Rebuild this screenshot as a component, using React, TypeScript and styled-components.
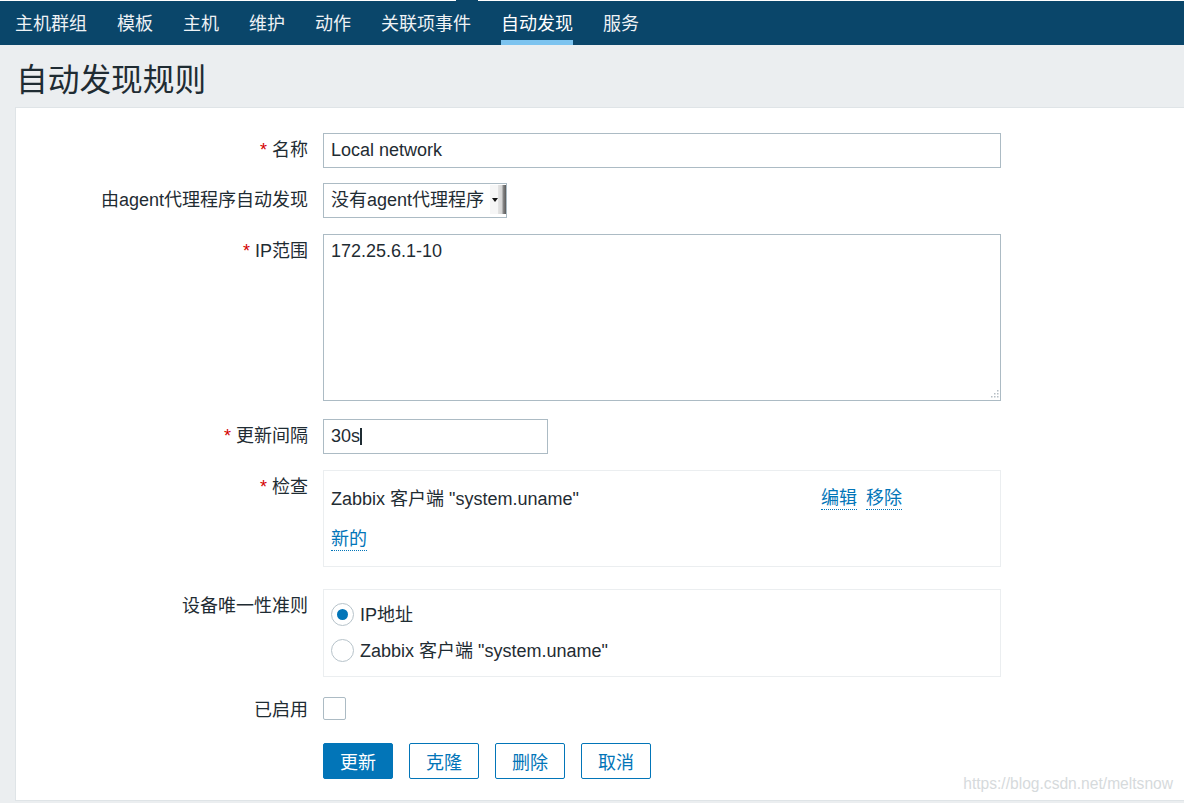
import React from "react";
import styled, { createGlobalStyle } from "styled-components";

const GlobalStyle = createGlobalStyle`
  html, body {
    margin: 0;
    padding: 0;
    background: #ebeef0;
    color: #1f2c33;
    font-family: "Liberation Sans", "Noto Sans CJK SC", sans-serif;
    font-size: 18px;
  }
  * { box-sizing: border-box; }
`;

const Nav = styled.nav`
  position: relative;
  height: 45px;
  background: #0a466a;
  display: flex;
  gap: 30px;
  padding-left: 15px;
  &::before {
    content: "";
    position: absolute;
    top: 0;
    left: 0;
    right: 0;
    height: 1px;
    background: linear-gradient(
      to right,
      #ffffff 0 456px,
      transparent 456px 478px,
      #ffffff 478px
    );
  }
`;

const NavItem = styled.a<{ $active?: boolean }>`
  position: relative;
  display: flex;
  align-items: center;
  height: 45px;
  padding-bottom: 2px;
  color: ${(p) => (p.$active ? "#ffffff" : "#eef2f5")};
  font-size: 18px;
  text-decoration: none;
  white-space: nowrap;
  &::after {
    content: "";
    display: ${(p) => (p.$active ? "block" : "none")};
    position: absolute;
    left: 0;
    right: 0;
    bottom: 0;
    height: 5px;
    background: #7cc3ef;
  }
`;

const TitleBar = styled.header`
  height: 62px;
  display: flex;
  align-items: center;
  padding: 8px 0 0 16px;
`;

const Title = styled.h1`
  margin: 0;
  font-size: 31.7px;
  font-weight: normal;
  line-height: 36px;
  color: #1f2c33;
`;

const Panel = styled.main`
  position: relative;
  margin-left: 15px;
  background: #ffffff;
  border: 1px solid #dfe4e7;
  border-right: none;
  padding: 25px 0 21px;
`;

const Row = styled.div<{ $gap: number }>`
  display: grid;
  grid-template-columns: 292px 1fr;
  column-gap: 15px;
  align-items: start;
  margin-top: ${(p) => p.$gap}px;
`;

const Label = styled.label<{ $lh?: number }>`
  text-align: right;
  white-space: nowrap;
  font-size: 18px;
  line-height: ${(p) => p.$lh ?? 35}px;
  padding-top: ${(p) => (p.$lh ? 1 : 0)}px;
  color: #1f2c33;
`;

const Req = styled.span`
  color: #d40000;
  margin-right: 5px;
`;

const TextInput = styled.input<{ $w: number }>`
  display: block;
  width: ${(p) => p.$w}px;
  height: 35px;
  border: 1px solid #acbbc4;
  padding: 0 7px 1px;
  font-family: inherit;
  font-size: 18px;
  color: #1f2c33;
  background: #ffffff;
  outline: none;
  border-radius: 0;
`;

const InputWrap = styled.div<{ $w: number }>`
  position: relative;
  width: ${(p) => p.$w}px;
`;

const Caret = styled.span`
  position: absolute;
  left: 37px;
  top: 9px;
  width: 2px;
  height: 17px;
  background: #1f2c33;
`;

const SelectBox = styled.div`
  display: flex;
  align-items: stretch;
  width: 184px;
  height: 35px;
  border: 1px solid #acbbc4;
  background: #ffffff;
`;

const SelectText = styled.span`
  flex: 1;
  padding-left: 7px;
  line-height: 32px;
  white-space: nowrap;
  overflow: hidden;
`;

const SelectArrow = styled.span`
  position: relative;
  flex: none;
  width: 16px;
  margin: 1px 0 3px;
  background: linear-gradient(
    to right,
    #f6f6f6 0 8px,
    #e4e4e4 8px,
    #d4d4d4 12px,
    #8c8c8c 13px,
    #5a5a5a 16px
  );
  &::after {
    content: "";
    position: absolute;
    left: 2px;
    top: 13px;
    border-left: 3px solid transparent;
    border-right: 3px solid transparent;
    border-top: 4px solid #111;
  }
`;

const AreaWrap = styled.div`
  position: relative;
  width: 678px;
  height: 167px;
`;

const TextArea = styled.textarea`
  display: block;
  width: 100%;
  height: 100%;
  border: 1px solid #acbbc4;
  padding: 5px 7px;
  font-family: inherit;
  font-size: 18px;
  line-height: 22px;
  color: #1f2c33;
  resize: none;
  outline: none;
  border-radius: 0;
`;

const Grip = styled.svg`
  position: absolute;
  right: 2px;
  bottom: 2px;
`;

const Box = styled.div<{ $pad: string }>`
  width: 678px;
  border: 1px solid #ebeef0;
  padding: ${(p) => p.$pad};
`;

const CheckLine = styled.div`
  display: grid;
  grid-template-columns: 490px auto;
  align-items: center;
  line-height: 22px;
`;

const Actions = styled.div`
  display: flex;
  gap: 9px;
`;

const Link = styled.a<{ $top?: number }>`
  display: inline-block;
  color: #0275b8;
  text-decoration: none;
  line-height: 22px;
  border-bottom: 1px dotted #0275b8;
  margin-top: ${(p) => p.$top ?? 0}px;
`;

const RadioList = styled.div`
  display: flex;
  flex-direction: column;
  gap: 13px;
`;

const RadioItem = styled.label`
  display: flex;
  align-items: center;
  height: 23px;
  gap: 6px;
  white-space: nowrap;
`;

const RadioText = styled.span`
  padding-bottom: 3px;
`;

const RadioCircle = styled.span<{ $checked?: boolean }>`
  position: relative;
  width: 23px;
  height: 23px;
  border-radius: 50%;
  border: 1px solid #b7c3ca;
  background: #ffffff;
  flex: none;
  &::after {
    content: "";
    display: ${(p) => (p.$checked ? "block" : "none")};
    position: absolute;
    left: 5px;
    top: 5px;
    width: 11px;
    height: 11px;
    border-radius: 50%;
    background: #0275b8;
  }
`;

const CheckBox = styled.span`
  display: block;
  width: 23px;
  height: 23px;
  border: 1px solid #acbbc4;
  border-radius: 2px;
  background: #ffffff;
`;

const ButtonRow = styled.div`
  display: flex;
  gap: 16px;
`;

const Button = styled.button<{ $primary?: boolean }>`
  width: 70px;
  height: 36px;
  border: 1px solid #0275b8;
  border-radius: 2px;
  background: ${(p) => (p.$primary ? "#0275b8" : "#ffffff")};
  color: ${(p) => (p.$primary ? "#ffffff" : "#0275b8")};
  font-family: inherit;
  font-size: 18px;
  padding: 0;
  cursor: pointer;
`;

const Watermark = styled.span`
  position: absolute;
  right: 11px;
  bottom: 7px;
  font-size: 15.6px;
  line-height: 18px;
  color: #d6dadc;
  white-space: nowrap;
`;

const navItems = ["主机群组", "模板", "主机", "维护", "动作", "关联项事件", "自动发现", "服务"];

const GripDots = () => (
  <Grip width="10" height="10" viewBox="0 0 10 10">
    {[
      [8, 1],
      [8, 4],
      [5, 4],
      [8, 7],
      [5, 7],
      [2, 7],
    ].map(([x, y], i) => (
      <rect key={i} x={x} y={y} width="1.5" height="1.5" fill="#b5bec4" />
    ))}
  </Grip>
);

export default function App() {
  return (
    <>
      <GlobalStyle />
      <Nav>
        {navItems.map((n) => (
          <NavItem key={n} $active={n === "自动发现"}>
            {n}
          </NavItem>
        ))}
      </Nav>
      <TitleBar>
        <Title>自动发现规则</Title>
      </TitleBar>
      <Panel>
        <Row $gap={0}>
          <Label>
            <Req>*</Req>名称
          </Label>
          <TextInput $w={678} defaultValue="Local network" />
        </Row>
        <Row $gap={15}>
          <Label>由agent代理程序自动发现</Label>
          <SelectBox>
            <SelectText>没有agent代理程序</SelectText>
            <SelectArrow />
          </SelectBox>
        </Row>
        <Row $gap={16}>
          <Label>
            <Req>*</Req>IP范围
          </Label>
          <AreaWrap>
            <TextArea defaultValue="172.25.6.1-10" />
            <GripDots />
          </AreaWrap>
        </Row>
        <Row $gap={18}>
          <Label>
            <Req>*</Req>更新间隔
          </Label>
          <InputWrap $w={225}>
            <TextInput $w={225} defaultValue="30s" />
            <Caret />
          </InputWrap>
        </Row>
        <Row $gap={16}>
          <Label>
            <Req>*</Req>检查
          </Label>
          <Box $pad="16px 7px 15px">
            <CheckLine>
              <span>Zabbix 客户端 "system.uname"</span>
              <Actions>
                <Link>编辑</Link>
                <Link>移除</Link>
              </Actions>
            </CheckLine>
            <Link $top={18}>新的</Link>
          </Box>
        </Row>
        <Row $gap={22}>
          <Label>设备唯一性准则</Label>
          <Box $pad="13px 7px 14px">
            <RadioList>
              <RadioItem>
                <RadioCircle $checked />
                <RadioText>IP地址</RadioText>
              </RadioItem>
              <RadioItem>
                <RadioCircle />
                <RadioText>Zabbix 客户端 "system.uname"</RadioText>
              </RadioItem>
            </RadioList>
          </Box>
        </Row>
        <Row $gap={20}>
          <Label $lh={24}>已启用</Label>
          <CheckBox />
        </Row>
        <Row $gap={21}>
          <span />
          <ButtonRow>
            <Button $primary>更新</Button>
            <Button>克隆</Button>
            <Button>删除</Button>
            <Button>取消</Button>
          </ButtonRow>
        </Row>
        <Watermark>https://blog.csdn.net/meltsnow</Watermark>
      </Panel>
    </>
  );
}
